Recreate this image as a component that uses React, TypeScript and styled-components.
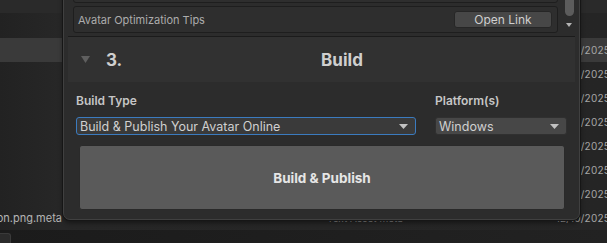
import React from "react";
import styled, { createGlobalStyle } from "styled-components";

const GlobalStyle = createGlobalStyle`
  html, body {
    margin: 0;
    padding: 0;
    background: #1c1c1c;
  }
  body {
    font-family: Inter, "Noto Sans", sans-serif;
  }
  * {
    box-sizing: border-box;
  }
`;

const Screen = styled.div`
  position: relative;
  width: 607px;
  height: 243px;
  overflow: hidden;
  background: #232323;
`;

// project browser behind the floating window
const ProjectList = styled.div`
  display: flex;
  flex-direction: column;
  height: 100%;
  background: linear-gradient(90deg, #222222 0%, #272727 60px, #252525 100%);
`;

const ListTop = styled.div`
  height: 13px;
  background: #2a2a2a;
`;

const ListGap = styled.div`
  height: 25px;
`;

const FileRow = styled.div<{ $selected?: boolean }>`
  display: flex;
  align-items: center;
  height: 24px;
  background: ${(p) => (p.$selected ? "#3a3a3a" : "transparent")};
  font-size: 10px;
  color: #a6a6a6;
  white-space: nowrap;
`;

const NameCell = styled.div`
  width: 62px;
  display: flex;
  justify-content: flex-end;
  overflow: hidden;
  font-size: 11px;
  color: #b4b4b4;
`;

const TypeCell = styled.div`
  flex: 1;
  padding-left: 265px;
  color: #8a8a8a;
`;

const DateCell = styled.div`
  display: flex;
  justify-content: flex-end;
  margin-right: -3px;
  letter-spacing: 0.2px;
`;

const BottomBar = styled.div`
  flex: 1;
  display: flex;
  align-items: flex-end;
  background: linear-gradient(90deg, #1b1b1b, #222222);
`;

const BarBox = styled.div`
  width: 11px;
  height: 10px;
  background: #2b2b2b;
  border: 1px solid #3a3a3a;
  border-left: none;
  border-bottom: none;
  border-radius: 0 3px 0 0;
`;

// floating builder window
const FloatingWindow = styled.div`
  position: absolute;
  left: 63px;
  top: -12px;
  width: 517px;
  height: 232px;
  display: flex;
  flex-direction: column;
  padding: 0 4px 9px;
  background: #2c2c2c;
  border: 1px solid #404040;
  border-radius: 0 0 7px 7px;
  box-shadow: 0 0 0 1px #161616, 0 3px 5px rgba(0, 0, 0, 0.45);
`;

const ScrollArea = styled.div`
  display: flex;
  height: 47px;
  overflow: hidden;
`;

const ScrollContent = styled.div`
  flex: 1;
  display: flex;
  flex-direction: column;
  justify-content: flex-end;
  gap: 3px;
  padding: 0 4px 3px 5px;
`;

const InfoBox = styled.div`
  flex: none;
  height: 27px;
  display: flex;
  align-items: center;
  justify-content: space-between;
  padding: 0 5px 0 4px;
  background: #2e2e2e;
  border: 1px solid #1e1e1e;
  border-radius: 3px;
  font-size: 11px;
  color: #acacac;
`;

const SmallButton = styled.div`
  width: 98px;
  height: 17px;
  display: flex;
  align-items: center;
  justify-content: center;
  background: #474747;
  border: 1px solid #262626;
  border-radius: 3px;
  font-size: 12px;
  color: #cfcfcf;
`;

const Scrollbar = styled.div`
  width: 13px;
  display: flex;
  flex-direction: column;
  align-items: center;
`;

const Thumb = styled.div`
  width: 9px;
  height: 27px;
  margin-left: 1px;
  background: #5c5c5c;
  border-radius: 0 0 5px 5px;
`;

const ScrollArrow = styled.svg`
  margin-top: 7px;
  margin-left: 1px;
`;

const Separator = styled.div`
  height: 1px;
  background: #1b1b1b;
`;

const SectionHeader = styled.div`
  height: 45px;
  display: flex;
  align-items: center;
  padding-left: 13px;
  background: #313131;
  font-size: 17px;
  font-weight: 700;
  color: #cfcfcf;
`;

const Foldout = styled.svg`
  flex: none;
`;

const StepNumber = styled.div`
  width: 31px;
  padding-left: 16px;
  box-sizing: content-box;
  width: 15px;
`;

const SectionTitle = styled.div`
  flex: 1;
  text-align: center;
  padding-right: 12px;
`;

const SectionBody = styled.div`
  display: flex;
  flex-direction: column;
  padding: 12px 8px 0;
`;

const FieldRow = styled.div`
  display: grid;
  grid-template-columns: 1fr 132px;
  column-gap: 19px;
`;

const Field = styled.div`
  display: flex;
  flex-direction: column;
`;

const FieldLabel = styled.div`
  height: 14px;
  line-height: 14px;
  margin-bottom: 9px;
  font-size: 12px;
  font-weight: 600;
  color: #c6c6c6;
`;

const Dropdown = styled.div<{ $focused?: boolean }>`
  height: 18px;
  display: flex;
  align-items: center;
  justify-content: space-between;
  padding: 0 7px 0 3px;
  background: ${(p) => (p.$focused ? "#3a3a3a" : "#474747")};
  border: 1px solid ${(p) => (p.$focused ? "#3b7bbf" : "#303030")};
  border-radius: 3px;
  font-size: 12.5px;
  color: #d0d0d0;
  white-space: nowrap;
`;

const BigButton = styled.div`
  height: 65px;
  margin: 10px 2px 0 3px;
  display: flex;
  align-items: center;
  justify-content: center;
  background: #5a5a5a;
  border: 1px solid #2a2a2a;
  border-radius: 3px;
  font-size: 13.5px;
  font-weight: 700;
  color: #e6e6e6;
`;

const DropArrow = () => (
  <svg width="9" height="5" viewBox="0 0 9 5">
    <polygon points="0,0 9,0 4.5,5" fill="#c2c2c2" />
  </svg>
);

const rows = [
  { selected: true },
  {},
  {},
  {},
  {},
  {},
  {},
  { name: "icon.png.meta", type: "Text Asset   meta", last: true },
];

export default function App() {
  return (
    <>
      <GlobalStyle />
      <Screen>
        <ProjectList>
          <ListTop />
          <ListGap />
          {rows.map((r, i) => (
            <FileRow key={i} $selected={r.selected}>
              <NameCell>{r.name ?? ""}</NameCell>
              <TypeCell>{r.type ?? ""}</TypeCell>
              <DateCell>12/10/2025</DateCell>
            </FileRow>
          ))}
          <BottomBar>
            <BarBox />
          </BottomBar>
        </ProjectList>

        <FloatingWindow>
          <ScrollArea>
            <ScrollContent>
              <InfoBox />
              <InfoBox>
                <span>Avatar Optimization Tips</span>
                <SmallButton>Open Link</SmallButton>
              </InfoBox>
            </ScrollContent>
            <Scrollbar>
              <Thumb />
              <ScrollArrow width="6" height="4" viewBox="0 0 6 4">
                <polygon points="0,0 6,0 3,4" fill="#b4b4b4" />
              </ScrollArrow>
            </Scrollbar>
          </ScrollArea>
          <Separator />
          <SectionHeader>
            <Foldout width="9" height="7" viewBox="0 0 9 7">
              <polygon points="0,0 9,0 4.5,7" fill="#5f5f5f" />
            </Foldout>
            <StepNumber>3.</StepNumber>
            <SectionTitle>Build</SectionTitle>
          </SectionHeader>
          <SectionBody>
            <FieldRow>
              <Field>
                <FieldLabel>Build Type</FieldLabel>
                <Dropdown $focused>
                  <span>Build &amp; Publish Your Avatar Online</span>
                  <DropArrow />
                </Dropdown>
              </Field>
              <Field>
                <FieldLabel>Platform(s)</FieldLabel>
                <Dropdown>
                  <span>Windows</span>
                  <DropArrow />
                </Dropdown>
              </Field>
            </FieldRow>
            <BigButton>Build &amp; Publish</BigButton>
          </SectionBody>
        </FloatingWindow>
      </Screen>
    </>
  );
}
